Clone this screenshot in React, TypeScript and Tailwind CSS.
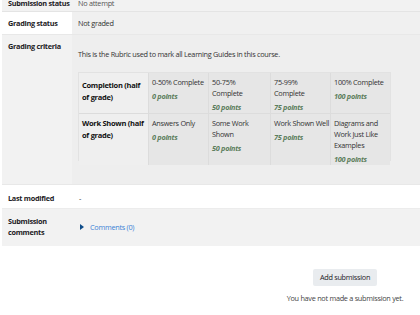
import React from "react";

const font = { fontFamily: '"Open Sans", "Noto Sans", Arial, sans-serif' };

function Pts({ v }: { v: string }) {
  return <div className="mt-[3px] italic font-bold text-[#5b7d5b]">{v}</div>;
}

function Level({ d, p }: { d: React.ReactNode; p: string }) {
  return (
    <div className="bg-[#e6e6e6] border-l border-[#dcdcdc] pl-[3px] pt-[4px] leading-[11px] whitespace-nowrap">
      <div>{d}</div>
      <Pts v={p} />
    </div>
  );
}

export default function App() {
  return (
    <div className="w-[420px] h-[315px] overflow-hidden bg-white text-[7.3px] tracking-[-0.28px] text-[#333]" style={font}>
      <div className="ml-[2px] mt-[-10px]">
        {/* Row 1 */}
        <div className="grid grid-cols-[70px_1fr] h-[22px] bg-[#f2f2f2] border-b border-[#e4e4e4]">
          <div className="pl-[6px] pt-[8px] font-bold text-[#1d2125] whitespace-nowrap">Submission status</div>
          <div className="pl-[6px] pt-[8px] text-[#555]">No attempt</div>
        </div>
        {/* Row 2 */}
        <div className="grid grid-cols-[70px_1fr] h-[23px] border-b border-[#e8e8e8]">
          <div className="bg-white pl-[6px] pt-[6px] font-bold text-[#1d2125] whitespace-nowrap">Grading status</div>
          <div className="bg-[#f0f0f0] pl-[6px] pt-[6px]">Not graded</div>
        </div>
        {/* Row 3 */}
        <div className="grid grid-cols-[70px_1fr] h-[150px] bg-[#f2f2f2] border-b border-[#e8e8e8]">
          <div className="pl-[6px] pt-[6px] font-bold text-[#1d2125] whitespace-nowrap">Grading criteria</div>
          <div className="bg-[#eeeeee] pl-[6px] pt-[14px]">
            <div>This is the Rubric used to mark all Learning Guides in this course.</div>
            <div className="mt-[12px] w-[313px] border border-[#e2e2e2] bg-[#efefef]">
              <div className="grid grid-cols-[69px_60px_62px_60px_1fr] h-[41px] border-b border-[#dcdcdc]">
                <div className="bg-[#efefef] pl-[3px] pt-[6px] font-bold text-[#111] text-[7.5px] leading-[12px]">Completion (half of grade)</div>
                <Level d="0-50% Complete" p="0 points" />
                <Level d={<>50-75%<br />Complete</>} p="50 points" />
                <Level d={<>75-99%<br />Complete</>} p="75 points" />
                <Level d="100% Complete" p="100 points" />
              </div>
              <div className="grid grid-cols-[69px_60px_62px_60px_1fr] h-[46px]">
                <div className="bg-[#efefef] pl-[3px] pt-[3px] font-bold text-[#111] text-[7.5px] leading-[12px]">Work Shown (half of grade)</div>
                <Level d="Answers Only" p="0 points" />
                <Level d={<>Some Work<br />Shown</>} p="50 points" />
                <Level d="Work Shown Well" p="75 points" />
                <Level d={<>Diagrams and<br />Work Just Like<br />Examples</>} p="100 points" />
              </div>
            </div>
          </div>
        </div>
        {/* Row 4 */}
        <div className="grid grid-cols-[70px_1fr] h-[24px] bg-white border-b border-[#ececec]">
          <div className="pl-[6px] pt-[8px] font-bold text-[#1d2125] whitespace-nowrap">Last modified</div>
          <div className="pl-[7px] pt-[8px]">-</div>
        </div>
        {/* Row 5 */}
        <div className="grid grid-cols-[70px_1fr] h-[37px] bg-[#f2f2f2]">
          <div className="pl-[6px] pt-[7px] font-bold text-[#1d2125] leading-[10.5px]">Submission<br />comments</div>
          <div className="pl-[8px] pt-[13px] flex items-start">
            <span className="mt-[2px] mr-[6px] w-0 h-0 border-y-[3px] border-y-transparent border-l-[4px] border-l-[#0f4d8a]" />
            <span className="text-[#3b82d6]">Comments (0)</span>
          </div>
        </div>
      </div>
      <div className="ml-[275px] w-[140px] mt-[23px] flex flex-col items-center">
        <div className="h-[17px] px-[7px] bg-[#e9ecef] rounded-[2px] flex items-center text-[#1d2125]">Add submission</div>
        <div className="mt-[7px] text-[#444] whitespace-nowrap">You have not made a submission yet.</div>
      </div>
    </div>
  );
}
